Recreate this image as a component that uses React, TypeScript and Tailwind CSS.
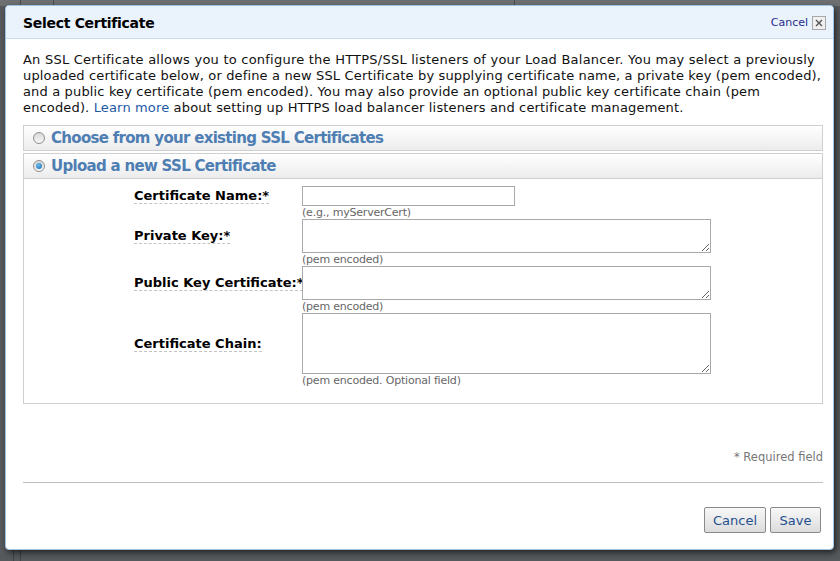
import React from "react";

const font = { fontFamily: '"DejaVu Sans", Verdana, sans-serif' };

function Radio({ checked }: { checked?: boolean }) {
  return (
    <span className="relative inline-block w-[12px] h-[12px] rounded-full border border-[#8f8f8f] bg-gradient-to-b from-[#d8d8d8] to-[#f8f8f8] shrink-0">
      {checked && (
        <span className="absolute left-[2px] top-[2px] w-[6px] h-[6px] rounded-full bg-[radial-gradient(circle_at_40%_35%,#6fc0f0,#1462a8)]" />
      )}
    </span>
  );
}

function Label({ children }: { children: React.ReactNode }) {
  return (
    <span className="whitespace-nowrap font-bold text-[13px] text-black border-b border-dashed border-[#c4c4c4] leading-[15px]">
      {children}
    </span>
  );
}

function Hint({ children }: { children: React.ReactNode }) {
  return <div className="text-[11px] leading-[13px] tracking-[-0.2px] text-[#666]">{children}</div>;
}

function Area({ h }: { h: string }) {
  return (
    <textarea
      className={`block w-[409px] ${h} border border-[#a9a9a9] bg-white resize-y outline-none`}
    />
  );
}

export default function App() {
  return (
    <div
      className="relative w-[840px] h-[561px] overflow-hidden bg-[#575a5d]"
      style={font}
    >
      {/* backdrop hints */}
      <div className="absolute left-0 top-0 w-[840px] h-[6px] bg-[#6d6f71]" />
      <div className="absolute left-[20px] top-0 w-px h-[6px] bg-[#4a4c4e]" />
      <div className="absolute left-[53px] top-0 w-px h-[6px] bg-[#4a4c4e]" />
      <div className="absolute left-[514px] top-0 w-px h-[6px] bg-[#4a4c4e]" />
      <div className="absolute left-[13px] bottom-0 w-px h-[12px] bg-[#3f4143]" />
      <div className="absolute left-[20px] bottom-0 w-px h-[12px] bg-[#3f4143]" />

      <div className="absolute left-[5px] top-[5px] w-[829px] h-[545px] rounded-[4px] border border-[#9cc3e6] bg-white shadow-[2px_3px_6px_rgba(0,0,0,0.6)] flex flex-col overflow-hidden">
        {/* header */}
        <div className="h-[33px] shrink-0 bg-[#eaf2fb] border-b border-[#c5dbf0] flex items-center pl-[17px] pr-[7px] pt-[2px]">
          <div className="font-bold text-[14px] tracking-[-0.3px] text-black flex-1">Select Certificate</div>
          <span className="text-[11px] text-[#1f2d8f] mr-[4px]">Cancel</span>
          <span className="w-[14px] h-[14px] border border-[#a8a8a8] bg-[#f0f0f0] flex items-center justify-center">
            <svg width="8" height="8" viewBox="0 0 8 8">
              <path d="M1 1L7 7M7 1L1 7" stroke="#555" strokeWidth="1.4" />
            </svg>
          </span>
        </div>

        <div className="flex-1 flex flex-col px-[17px]">
          <div className="mt-[13px] text-[13px] leading-[16px] text-[#111] whitespace-nowrap">
            <div className="tracking-[0.23px]">An SSL Certificate allows you to configure the HTTPS/SSL listeners of your Load Balancer. You may select a previously</div>
            <div className="tracking-[0.15px]">uploaded certificate below, or define a new SSL Certificate by supplying certificate name, a private key (pem encoded),</div>
            <div className="tracking-[0.15px]">and a public key certificate (pem encoded). You may also provide an optional public key certificate chain (pem</div>
            <div className="tracking-[0.15px]">
              encoded). <span className="text-[#1d5aa6]">Learn more</span> about setting up HTTPS load balancer listeners and certificate management.
            </div>
          </div>

          <div className="mt-[9px] w-[800px] h-[26px] border border-[#cfcfcf] bg-gradient-to-b from-white to-[#ececec] flex items-center pl-[9px] gap-[6px]">
            <Radio />
            <span className="font-bold text-[15px] tracking-[-0.7px] text-[#4f7eb3]">Choose from your existing SSL Certificates</span>
          </div>

          <div className="mt-[2px] w-[800px] h-[251px] border border-[#cfcfcf] flex flex-col">
            <div className="h-[25px] shrink-0 border-b border-[#cfcfcf] bg-gradient-to-b from-white to-[#ececec] flex items-center pl-[9px] gap-[6px]">
              <Radio checked />
              <span className="font-bold text-[15px] tracking-[-0.7px] text-[#4f7eb3]">Upload a new SSL Certificate</span>
            </div>

            <div className="pl-[110px] pt-[7px] grid grid-cols-[168px_auto] gap-y-0">
              <div className="flex items-center h-[20px]">
                <Label>Certificate Name:*</Label>
              </div>
              <div>
                <input className="block w-[213px] h-[20px] border border-[#a9a9a9] outline-none" />
                <Hint>(e.g., myServerCert)</Hint>
              </div>

              <div className="flex items-center h-[34px]">
                <Label>Private Key:*</Label>
              </div>
              <div>
                <Area h="h-[34px]" />
                <Hint>(pem encoded)</Hint>
              </div>

              <div className="flex items-center h-[34px]">
                <Label>Public Key Certificate:*</Label>
              </div>
              <div>
                <Area h="h-[34px]" />
                <Hint>(pem encoded)</Hint>
              </div>

              <div className="flex items-center h-[61px]">
                <Label>Certificate Chain:</Label>
              </div>
              <div>
                <Area h="h-[61px]" />
                <Hint>(pem encoded. Optional field)</Hint>
              </div>
            </div>
          </div>

          <div className="mt-[45px] w-[800px] text-right text-[11.5px] text-[#777]">* Required field</div>
          <div className="mt-[16px] w-[800px] h-px bg-[#bdbdbd]" />

          <div className="mt-[24px] w-[798px] flex justify-end gap-[4px]">
            <button className="w-[62px] h-[26px] border border-[#8a8a8a] rounded-[2px] bg-gradient-to-b from-[#f8f8f8] to-[#dcdcdc] text-[13px] text-[#1f4f8f]">
              Cancel
            </button>
            <button className="w-[51px] h-[26px] border border-[#8a8a8a] rounded-[2px] bg-gradient-to-b from-[#f8f8f8] to-[#dcdcdc] text-[13px] text-[#1f4f8f]">
              Save
            </button>
          </div>
        </div>
      </div>
    </div>
  );
}
